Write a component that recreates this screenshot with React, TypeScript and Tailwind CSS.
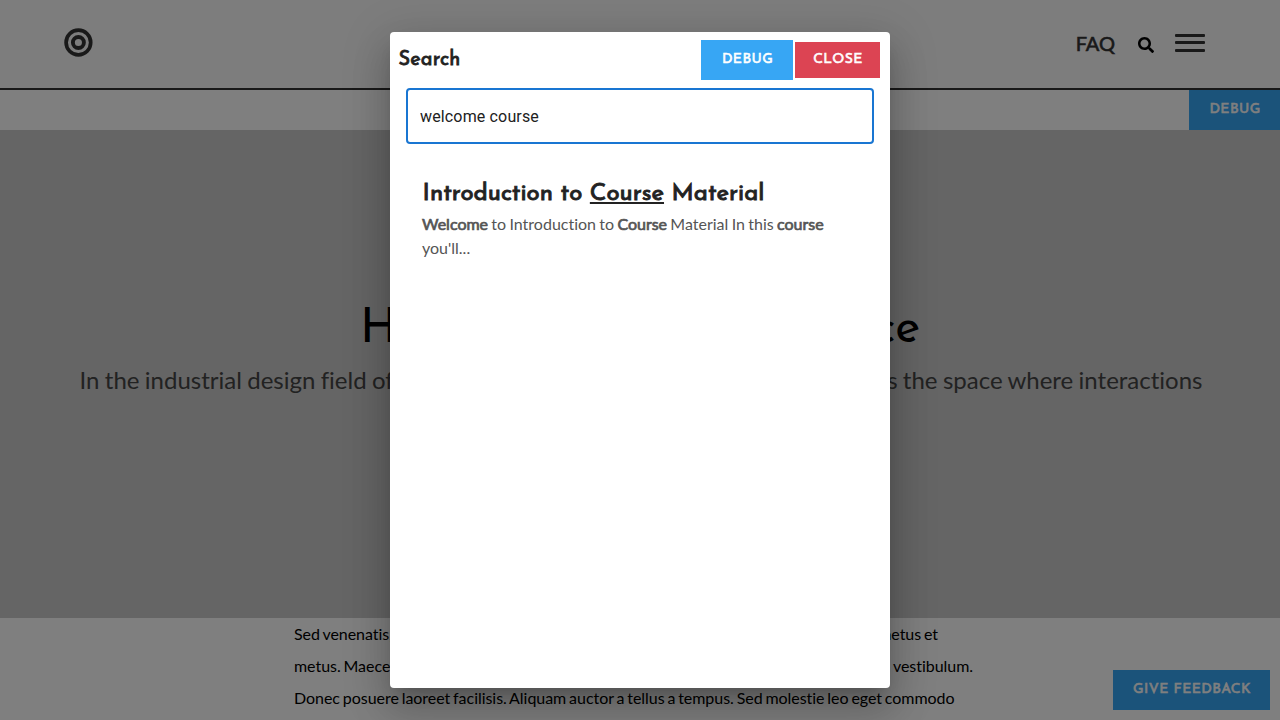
import { FaSearch } from "react-icons/fa";

const display = "font-['Josefin_Sans',Lato,sans-serif] [word-spacing:0px]";
const buttonText = "pb-px pl-[1px] text-[14px] font-normal tracking-[0.42px] text-white [-webkit-text-stroke:0.55px_white]";

function TargetLogo() {
  return (
    <svg width="30" height="30" viewBox="0 0 30 30" fill="none" stroke="#333" className="block">
      <circle cx="15.4" cy="15.5" r="12.3" strokeWidth="3.7" />
      <circle cx="15.4" cy="15.5" r="5.5" strokeWidth="3.9" />
    </svg>
  );
}

function Header() {
  return (
    <header className="flex h-[90px] items-start justify-between border-b-2 border-[#333] bg-[#fafafa] pl-[63px] pr-[75px]">
      <div className="pt-[27px]">
        <TargetLogo />
      </div>
      <div className="flex items-start">
        <span className="mt-[28px] text-[20px] leading-[30px] text-[#333] [-webkit-text-stroke:0.6px_#333]">FAQ</span>
        <FaSearch className="ml-[23px] mt-[37px] size-4 text-black" />
        <div className="ml-[21px] mt-[34px] flex w-[30px] flex-col">
          <span className="h-[3px] rounded-[1px] bg-[#333]" />
          <span className="mt-1 h-[3px] rounded-[1px] bg-[#333]" />
          <span className="mt-[5px] h-[3px] rounded-[1px] bg-[#333]" />
        </div>
      </div>
    </header>
  );
}

function Page() {
  return (
    <div className="h-[720px] overflow-hidden bg-white">
      <Header />
      <div className="flex h-10 justify-end">
        <button className={`${display} ${buttonText} h-10 w-[91px] bg-[#37a6f4]`}>DEBUG</button>
      </div>
      <section className="flex h-[488px] flex-col items-center bg-[#cacaca] pt-[172px]">
        <h1 className={`${display} h-14 whitespace-nowrap text-[48px] leading-[57px] tracking-[-0.28px] text-black`}>
          Human Machine Interface
        </h1>
        <p className="mt-px flex h-[42px] w-[1123px] justify-between whitespace-nowrap pl-px text-[24px] leading-[42px] text-[#444]">
          <span>In the industrial design field of human-computer</span>
          <span className="-mr-px">interaction, a user interface is the space where interactions</span>
        </p>
      </section>
      <div className="ml-[294px] flex w-[692px] flex-col whitespace-nowrap text-[16px] leading-8 tracking-[-0.04px] text-black [word-spacing:-1.2px]">
        <p className="flex w-[644px] justify-between">
          <span>Sed venenatis, justo eu</span>
          <span>tempus metus et</span>
        </p>
        <p className="flex w-[679px] justify-between">
          <span>metus. Maecenas sed</span>
          <span>lorem vestibulum.</span>
        </p>
        <p>Donec posuere laoreet facilisis. Aliquam auctor a tellus a tempus. Sed molestie leo eget commodo</p>
      </div>
    </div>
  );
}

function Hit({ children }: { children: string }) {
  return <span className="[-webkit-text-stroke:0.7px_#555]">{children}</span>;
}

function SearchDialog() {
  return (
    <div
      role="dialog"
      className="flex h-[656px] w-[500px] flex-col rounded bg-white shadow-[0px_11px_15px_-7px_rgba(0,0,0,0.2),0px_24px_38px_3px_rgba(0,0,0,0.14),0px_9px_46px_8px_rgba(0,0,0,0.12)]"
    >
      <div className="flex h-14 items-center justify-between pl-2 pr-[10px]">
        <h2 className={`${display} pl-[0.6px] text-[20px] font-normal leading-7 tracking-[0.1px] text-[#222] [-webkit-text-stroke:0.8px_#222]`}>Search</h2>
        <div className="flex items-center gap-[2px]">
          <button className={`${display} ${buttonText} h-10 w-[92px] bg-[#37a6f4]`}>DEBUG</button>
          <button className={`${display} ${buttonText} h-9 w-[85px] bg-[#dc4453]`}>CLOSE</button>
        </div>
      </div>
      <div className="px-4">
        <input
          defaultValue="welcome course"
          className="block h-14 w-full rounded border-2 border-[#1976d2] bg-white px-3 font-[Roboto,sans-serif] text-[16px] tracking-[0.15px] text-[#212121] outline-none"
        />
      </div>
      <div className="flex flex-col px-8 pt-[34px]">
        <h3 className={`${display} whitespace-nowrap pl-[0.6px] text-[24px] font-normal leading-8 tracking-[0.01px] text-[#222] [-webkit-text-stroke:0.9px_#222]`}>
          Introduction to <span className="underline decoration-2 underline-offset-2">Course</span> Material
        </h3>
        <p className="mt-[2px] text-[16px] leading-6 text-[#555]">
          <Hit>Welcome</Hit> to Introduction to <Hit>Course</Hit> Material In this <Hit>course</Hit> you'll...
        </p>
      </div>
    </div>
  );
}

export default function App() {
  return (
    <div className="relative h-[720px] w-[1280px] overflow-hidden font-[Lato,sans-serif] [font-variant-ligatures:none] [word-spacing:-0.8px]">
      <Page />
      <button className={`${display} ${buttonText} absolute bottom-[10px] right-[10px] h-10 w-[157px] bg-[#37a6f4]`}>
        GIVE FEEDBACK
      </button>
      <div className="absolute inset-0 flex items-center justify-center bg-black/50">
        <SearchDialog />
      </div>
    </div>
  );
}
